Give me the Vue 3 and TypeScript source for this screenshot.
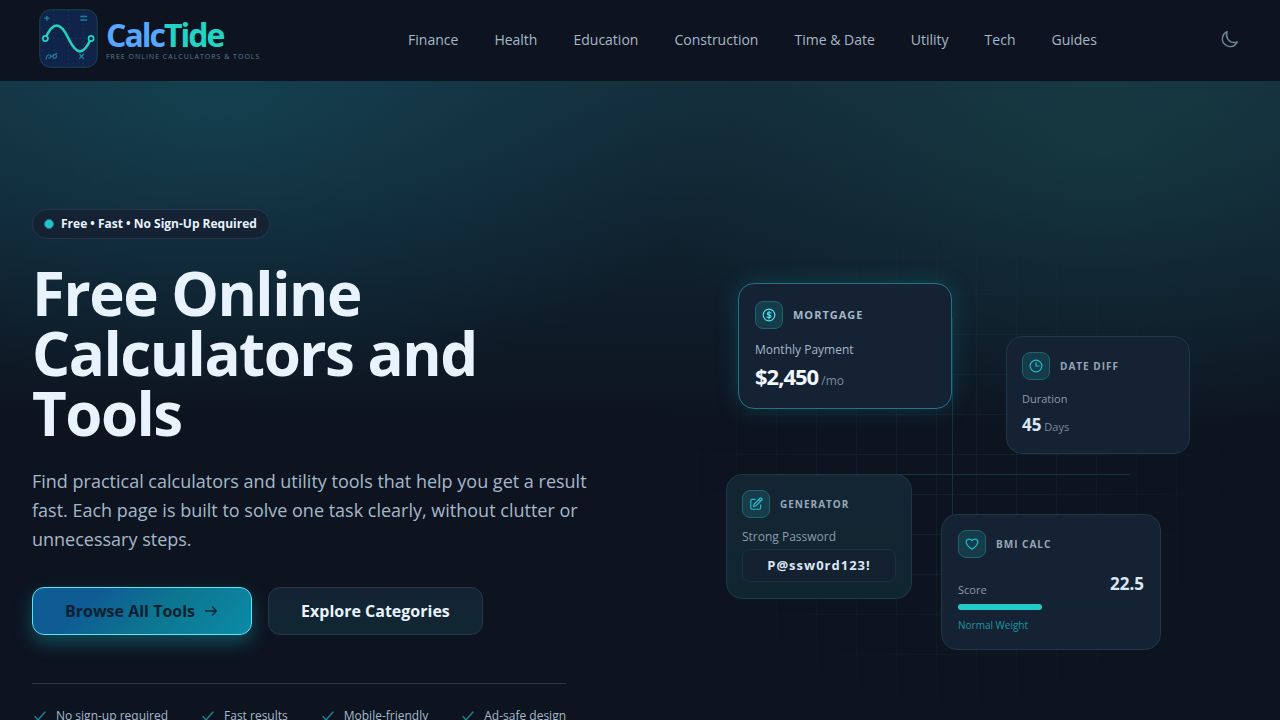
<script setup lang="ts">
interface NavLink {
  label: string
  href: string
}

const links: NavLink[] = [
  { label: 'Finance', href: '#finance' },
  { label: 'Health', href: '#health' },
  { label: 'Education', href: '#education' },
  { label: 'Construction', href: '#construction' },
  { label: 'Time & Date', href: '#time-date' },
  { label: 'Utility', href: '#utility' },
  { label: 'Tech', href: '#tech' },
  { label: 'Guides', href: '#guides' },
]

const perks: string[] = ['No sign-up required', 'Fast results', 'Mobile-friendly', 'Ad-safe design']
const bmiPercent = 45
</script>

<template>
  <div class="page">
    <header class="header">
      <a class="brand" href="#home" aria-label="CalcTide home">
        <svg class="mark" viewBox="0 0 60 60" fill="none">
          <rect x="0.75" y="0.75" width="58.5" height="58.5" rx="11" fill="#10244a" stroke="#1b4355" />
          <path d="M30 1v58M15 1v58M45 1v58M1 30h58" stroke="#1c5068" stroke-width="0.8" stroke-dasharray="1.5 3" opacity="0.7" />
          <path d="M6.500 30C14 12.500 21.500 12.500 30 30S45 47.500 53 30" stroke="#22d3c5" stroke-width="2.6" />
          <circle cx="6.500" cy="30" r="2.600" fill="#10244a" stroke="#22d3c5" stroke-width="1.700" />
          <circle cx="53" cy="30" r="2.600" fill="#10244a" stroke="#22d3c5" stroke-width="1.700" />
          <path d="M8 7v5M5.500 9.500h5M42 7.700h7M42 11.200h7M41 45.500l4.500 5M45.500 45.500l-4.500 5" stroke="#217d9b" stroke-width="1.500" />
          <path d="M7 51.500c.5-3 1.500-5 3.500-5s2 3.500-1 3.500c3 0 4.500-4 6.500-4s2.500 3.500.5 4-3.500-2-1-3.500l3-1.500" stroke="#217d9b" stroke-width="1.200" />
        </svg>
        <span class="wordmark">
          <span class="name">Calc<b>Tide</b></span>
          <span class="tagline">FREE ONLINE CALCULATORS &amp; TOOLS</span>
        </span>
      </a>
      <nav class="nav" aria-label="Main">
        <a v-for="link in links" :key="link.label" :href="link.href">{{ link.label }}</a>
      </nav>
      <button class="theme" type="button" aria-label="Toggle theme">
        <svg viewBox="0 0 24 24" fill="none" stroke="currentColor" stroke-width="1.8" stroke-linecap="round" stroke-linejoin="round">
          <path d="M21.750 15A9.700 9.700 0 0 1 18 15.750 9.750 9.750 0 0 1 9 2.250 9.750 9.750 0 1 0 21.750 15z" />
        </svg>
      </button>
    </header>

    <main class="hero">
      <section class="intro">
        <p class="pill"><span class="dot"></span>Free • Fast • No Sign-Up Required</p>
        <h1>Free Online Calculators and Tools</h1>
        <p class="lead">
          Find practical calculators and utility tools that help you get a result fast. Each page is built to
          solve one task clearly, without clutter or unnecessary steps.
        </p>
        <div class="actions">
          <a class="btn primary" href="#tools">
            Browse All Tools
            <svg viewBox="0 0 16 16" fill="none" stroke="currentColor" stroke-width="1.3" stroke-linecap="round" stroke-linejoin="round">
              <path d="M2.500 8h11M9.500 4 13.500 8 9.500 12" />
            </svg>
          </a>
          <a class="btn secondary" href="#categories">Explore Categories</a>
        </div>
        <ul class="perks">
          <li v-for="perk in perks" :key="perk">
            <svg viewBox="0 0 16 16" fill="none" stroke="currentColor" stroke-width="1.3" stroke-linecap="round" stroke-linejoin="round">
              <path d="m3 8.500 3 3.500 7-8" />
            </svg>
            {{ perk }}
          </li>
        </ul>
      </section>

      <section class="stage" aria-label="Calculator previews">
        <div class="grid-lines"></div>
        <div class="axis horizontal"></div>
        <div class="axis vertical"></div>

        <article class="card mortgage">
          <header>
            <span class="icon">
              <svg viewBox="0 0 24 24">
                <circle cx="12" cy="12" r="10" />
                <path d="M15.500 8.500c-1-1-6.500-1.500-6.500 1.200 0 3.200 6.500 1.500 6.500 4.600 0 2.700-5.500 2.500-7 .9M12 5.500v13" />
              </svg>
            </span>
            <h2>MORTGAGE</h2>
          </header>
          <p class="caption">Monthly Payment</p>
          <p class="value"><strong>$2,450</strong> /mo</p>
        </article>

        <article class="card date">
          <header>
            <span class="icon">
              <svg viewBox="0 0 24 24"><circle cx="12" cy="12" r="10" /><path d="M12 6v6h5" /></svg>
            </span>
            <h2>DATE DIFF</h2>
          </header>
          <p class="caption">Duration</p>
          <p class="value"><strong>45</strong> Days</p>
        </article>

        <article class="card generator">
          <header>
            <span class="icon">
              <svg viewBox="0 0 24 24">
                <path d="M10.500 4H5.500A2.500 2.500 0 0 0 3 6.500v12A2.500 2.500 0 0 0 5.500 21h12a2.500 2.500 0 0 0 2.500-2.500v-5" />
                <path d="M18.800 2.200a2.120 2.120 0 0 1 3 3L12 15l-4.500 1.500L9 12zM16.500 4.500l3 3" />
              </svg>
            </span>
            <h2>GENERATOR</h2>
          </header>
          <p class="caption">Strong Password</p>
          <output class="password">P@ssw0rd123!</output>
        </article>

        <article class="card bmi">
          <header>
            <span class="icon">
              <svg viewBox="0 0 24 24">
                <path d="M12 21C7 17.500 2 13.500 2 8.500 2 5.500 4.200 3.500 7 3.500c2.200 0 4.200 1.200 5 3 .8-1.800 2.800-3 5-3 2.800 0 5 2 5 5 0 5-5 9-10 12.500z" />
              </svg>
            </span>
            <h2>BMI CALC</h2>
          </header>
          <div class="score"><span class="caption">Score</span><strong>22.5</strong></div>
          <div class="track"><div class="fill" :style="{ width: bmiPercent + '%' }"></div></div>
          <p class="note">Normal Weight</p>
        </article>
      </section>
    </main>
  </div>
</template>

<style>
html {
  overflow: hidden;
}

body {
  margin: 0;
  background: #0d1420;
}
</style>

<style scoped>
.page {
  font-family: "Open Sans", "Noto Sans", sans-serif;
  color: #e8f3fd;
  background: #0d1420;
}

h1,
h2,
p,
ul {
  margin: 0;
  padding: 0;
}

a {
  color: inherit;
  text-decoration: none;
}

.header {
  display: flex;
  align-items: center;
  justify-content: space-between;
  box-sizing: border-box;
  height: 81px;
  padding: 0 32px 2px;
  background: #0d1420;
}

.brand {
  display: flex;
  align-items: center;
  gap: 8px;
  box-sizing: border-box;
  width: 261px;
  padding: 0 0 2px 7px;
}

.mark {
  width: 59px;
  height: 59px;
}

.wordmark {
  display: flex;
  flex-direction: column;
}

.name {
  font-size: 32px;
  line-height: 36px;
  font-weight: 700;
  letter-spacing: -2px;
  color: #58a6ff;
}

.name b {
  font-weight: 700;
  color: #20d5c5;
}

.tagline {
  font-size: 7px;
  line-height: 8px;
  font-weight: 400;
  letter-spacing: 1px;
  color: #587a8e;
  white-space: nowrap;
}

.nav {
  display: flex;
  gap: 36px;
  font-size: 14px;
  line-height: 20px;
  color: #a5b8ca;
  white-space: nowrap;
}

.theme {
  display: grid;
  place-items: center;
  width: 36px;
  height: 36px;
  padding: 0;
  border: 0;
  background: none;
  color: #718596;
}

.theme svg {
  width: 19px;
  height: 19px;
}

.hero {
  display: grid;
  grid-template-columns: 1fr 1fr;
  align-items: center;
  gap: 32px;
  padding: 128px 32px;
  background:
    radial-gradient(ellipse 520px 300px at 17% 20px, rgba(21, 94, 112, 0.4), rgba(21, 84, 108, 0.22) 50%, transparent),
    radial-gradient(ellipse 460px 300px at 86% 60px, rgba(28, 84, 82, 0.35), rgba(24, 76, 84, 0.18) 50%, transparent),
    linear-gradient(#142d3a, #10222f 150px, #0d1420 340px);
}

.intro {
  min-width: 0;
  padding-bottom: 15px;
}

.pill {
  display: flex;
  align-items: center;
  gap: 7px;
  box-sizing: border-box;
  width: fit-content;
  height: 30px;
  padding: 0 12px 0 11px;
  border: 1px solid #26384a;
  border-radius: 15px;
  background: #142233;
  font-size: 12px;
  line-height: 16px;
  font-weight: 700;
}

.dot {
  width: 8px;
  height: 8px;
  border: 1px solid #177f91;
  border-radius: 50%;
  background: #27c1c8;
}

h1 {
  margin-top: 24px;
  max-width: 560px;
  font-size: 60px;
  line-height: 60px;
  font-weight: 700;
  letter-spacing: -0.025em;
  color: #e8f3fd;
}

.lead {
  margin-top: 24px;
  max-width: 576px;
  font-size: 18px;
  line-height: 29px;
  color: #a5b8ca;
}

.actions {
  display: flex;
  gap: 16px;
  margin-top: 33px;
}

.btn {
  display: flex;
  align-items: center;
  gap: 8px;
  box-sizing: border-box;
  height: 48px;
  padding: 0 32px;
  border-radius: 12px;
  font-size: 16px;
  font-weight: 700;
  white-space: nowrap;
}

.btn svg {
  width: 16px;
  height: 16px;
}

.primary {
  border: 1px solid #5ce6f4;
  background: linear-gradient(135deg, #0f5b94 25%, #0d7690 58%, #0b8ba8);
  box-shadow: 0 8px 18px rgba(24, 162, 182, 0.38);
  color: #0c2030;
}

.secondary {
  border: 1px solid #26384a;
  background: linear-gradient(#142233, #102733);
}

.perks {
  display: flex;
  gap: 32px;
  width: fit-content;
  margin-top: 48px;
  padding-top: 24px;
  border-top: 1px solid #26384a;
  list-style: none;
  font-size: 12px;
  line-height: 16px;
  color: #a5b8ca;
  white-space: nowrap;
}

.perks li {
  display: flex;
  align-items: center;
  gap: 8px;
}

.perks svg {
  width: 16px;
  height: 16px;
  color: #238395;
}

.stage {
  position: relative;
  height: 520px;
}

.grid-lines {
  position: absolute;
  inset: 0;
  background:
    linear-gradient(rgba(34, 180, 190, 0.07) 1px, transparent 1px),
    linear-gradient(90deg, rgba(34, 180, 190, 0.07) 1px, transparent 1px);
  background-size: 40px 40px;
  mask-image: radial-gradient(ellipse at center, #000 20%, transparent 75%);
}

.axis {
  position: absolute;
  background: #12343f;
}

.horizontal {
  top: 50%;
  left: 20%;
  right: 20%;
  height: 1px;
}

.vertical {
  top: 20%;
  bottom: 20%;
  left: 50%;
  width: 1px;
}

.card {
  position: absolute;
  box-sizing: border-box;
  padding: 15px;
  border: 1px solid #1d3846;
  border-radius: 16px;
  background: #152233;
  color: #7a8b9d;
  font-size: 11px;
  line-height: 16px;
}

.card header {
  display: flex;
  align-items: center;
  gap: 10px;
}

.card h2 {
  font-size: 10px;
  line-height: 24px;
  font-weight: 700;
  letter-spacing: 1px;
  color: #97a7b7;
}

.icon {
  display: grid;
  place-items: center;
  box-sizing: border-box;
  width: 28px;
  height: 28px;
  border: 1px solid #1d6370;
  border-radius: 8px;
  background: #163c49;
}

.icon svg {
  width: 14px;
  height: 14px;
  fill: none;
  stroke: #22bccb;
  stroke-width: 2;
  stroke-linecap: round;
  stroke-linejoin: round;
}

.caption {
  margin-top: 11px;
  color: #8c9bac;
}

.value {
  margin-top: 6px;
  line-height: 24px;
}

.value strong {
  font-size: 17px;
  color: #dce7f2;
}

.mortgage {
  top: 69px;
  left: 82px;
  width: 214px;
  height: 126px;
  padding: 17px 16px;
  border-color: #217481;
  box-shadow: 0 0 22px rgba(30, 160, 175, 0.25);
  font-size: 12px;
}

.mortgage h2 {
  font-size: 11px;
  color: #a5b8ca;
}

.mortgage .caption {
  margin-top: 13px;
  color: #a5b8ca;
}

.mortgage .icon svg {
  stroke: #4be3f0;
}

.mortgage .value strong {
  font-size: 22px;
  letter-spacing: -1px;
  color: #f0f7ff;
}

.date {
  top: 122px;
  left: 350px;
  width: 184px;
  height: 118px;
}

.generator {
  top: 260px;
  left: 70px;
  width: 186px;
  height: 125px;
  background: linear-gradient(#142433, #10262f);
}

.generator .caption {
  font-size: 12px;
}

.password {
  display: block;
  margin-top: 4px;
  border: 1px solid #19313e;
  border-radius: 8px;
  background: #132131;
  color: #dce7f2;
  font-size: 13px;
  line-height: 31px;
  font-weight: 700;
  letter-spacing: 1px;
  text-align: center;
}

.bmi {
  top: 300px;
  left: 285px;
  width: 220px;
  height: 136px;
  padding: 15px 16px;
}

.score {
  display: flex;
  align-items: center;
  justify-content: space-between;
  margin-top: 12px;
}

.score strong {
  font-size: 17px;
  line-height: 28px;
  color: #dce7f2;
}

.track {
  height: 6px;
  margin-top: 6px;
  border-radius: 3px;
  background: #122331;
}

.fill {
  height: 6px;
  border-radius: 3px;
  background: #20cdc6;
}

.note {
  margin-top: 7px;
  font-size: 10px;
  line-height: 16px;
  color: #1698a5;
}
</style>
